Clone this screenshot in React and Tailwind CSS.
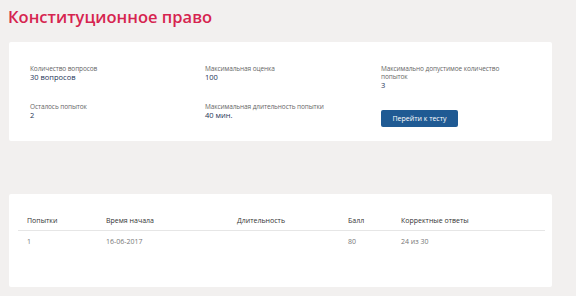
import React from 'react';

const info = [
  { label: 'Количество вопросов', value: '30 вопросов' },
  { label: 'Максимальная оценка', value: '100' },
  { label: 'Максимально допустимое количество попыток', value: '3' },
  { label: 'Осталось попыток', value: '2' },
  { label: 'Максимальная длительность попытки', value: '40 мин.' },
];

const attempts = [{ n: '1', start: '16-06-2017', duration: '', score: '80', correct: '24 из 30' }];

const App = () => {
  return (
    <div className="min-h-screen bg-[#f2f0ef] font-['Open_Sans',sans-serif] pt-[5px]">
      <h1 className="pl-2 text-[16.5px] font-semibold leading-6 text-[#d6244f]">Конституционное право</h1>

      <div className="ml-[9px] mt-[13px] w-[543px] h-[99px] bg-white rounded-[2px] pl-[21px] pt-[23px]">
        <div className="grid grid-cols-[175px_176px_128px] gap-y-[13px]">
          {info.map((item) => (
            <div key={item.label}>
              <div className="text-[6.5px] text-[#666] leading-[8px] tracking-[-0.1px]">{item.label}</div>
              <div className="text-[7.5px] text-[#1d3557] leading-[9px]">{item.value}</div>
            </div>
          ))}
          <div>
            <button className="w-[77px] h-[17px] rounded-[2px] bg-[#1f5a93] text-white text-[7px] leading-[17px]">
              Перейти к тесту
            </button>
          </div>
        </div>
      </div>

      <div className="ml-[9px] mt-[53px] w-[543px] h-[93px] bg-white rounded-[2px] pl-[9px] pr-[7px] pt-[19px]">
        <table className="w-full text-[7px] text-[#333] border-collapse">
          <thead>
            <tr className="border-b border-[#e6e6e6] text-left">
              <th className="font-normal pl-[9px] w-[88px] h-[17px]">Попытки</th>
              <th className="font-normal w-[131px]">Время начала</th>
              <th className="font-normal w-[111px]">Длительность</th>
              <th className="font-normal w-[53px]">Балл</th>
              <th className="font-normal">Корректные ответы</th>
            </tr>
          </thead>
          <tbody>
            {attempts.map((a) => (
              <tr key={a.n} className="text-[#777]">
                <td className="pl-[9px] h-[24px]">{a.n}</td>
                <td>{a.start}</td>
                <td>{a.duration}</td>
                <td>{a.score}</td>
                <td>{a.correct}</td>
              </tr>
            ))}
          </tbody>
        </table>
      </div>
    </div>
  );
};

export default App;
